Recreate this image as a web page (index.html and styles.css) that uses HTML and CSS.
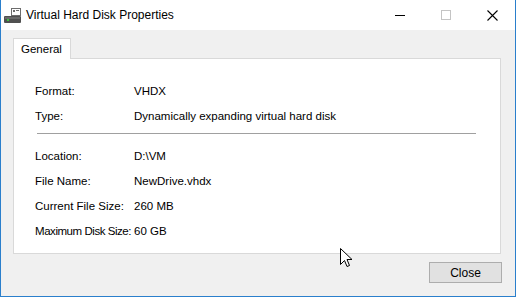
FILE: index.html
```html
<!DOCTYPE html>
<html lang="en">

<head>
    <meta charset="UTF-8" />
    <title>Virtual Hard Disk Properties</title>
    <link rel="stylesheet" href="styles.css">
</head>

<body>
    <div class="window">
        <div class="titlebar">
            <svg class="app-icon" width="17" height="16" viewBox="0 0 17 16">
                <rect x="7.5" y="0.5" width="9" height="7" fill="#fff" stroke="#6d6d6d" />
                <rect x="9" y="2" width="2" height="2" fill="#6d6d6d" />
                <rect x="12" y="2" width="3" height="1" fill="#6d6d6d" />
                <rect x="0" y="8" width="17" height="7" rx="1" fill="#505050" />
                <rect x="1" y="9" width="15" height="2" fill="#6a6a6a" />
                <rect x="3" y="11" width="2" height="2" fill="#3ec43e" />
            </svg>
            <span class="title">Virtual Hard Disk Properties</span>
            <div class="controls">
                <span class="ctl">
                    <svg width="10" height="10" viewBox="0 0 10 10"><rect x="0" y="5" width="10" height="1" fill="#000" /></svg>
                </span>
                <span class="ctl">
                    <svg width="10" height="10" viewBox="0 0 10 10"><rect x="0.5" y="0.5" width="9" height="9" fill="none" stroke="#c4c4c4" /></svg>
                </span>
                <span class="ctl">
                    <svg width="11" height="11" viewBox="0 0 11 11"><path d="M0.5 0.5 L10.5 10.5 M10.5 0.5 L0.5 10.5" stroke="#000" stroke-width="1.1" /></svg>
                </span>
            </div>
        </div>

        <div class="content">
            <div class="tabs">
                <div class="tab">General</div>
            </div>
            <div class="panel">
                <div class="row"><span class="label">Format:</span><span>VHDX</span></div>
                <div class="row"><span class="label">Type:</span><span>Dynamically expanding virtual hard disk</span></div>
                <div class="sep"></div>
                <div class="row"><span class="label">Location:</span><span>D:\VM</span></div>
                <div class="row"><span class="label">File Name:</span><span>NewDrive.vhdx</span></div>
                <div class="row"><span class="label">Current File Size:</span><span>260 MB</span></div>
                <div class="row"><span class="label tight">Maximum Disk Size:</span><span>60 GB</span></div>
            </div>
            <div class="footer">
                <button class="btn">Close</button>
            </div>
        </div>

        <svg class="cursor" width="13" height="20" viewBox="0 0 13 20">
            <path d="M0.5 0.5 L0.5 16.5 L4.5 12.5 L7 18.5 L9.5 17.5 L7 11.5 L12 11.5 Z" fill="#fff" stroke="#000" stroke-linejoin="miter" />
        </svg>
    </div>
</body>

</html>
```

FILE: styles.css
```css
body {
    margin: 0;
    padding: 0;
    font-family: "Liberation Sans", Arial, sans-serif;
    font-size: 11.5px;
    color: #000;
}

.window {
    position: relative;
    width: 516px;
    height: 297px;
    box-sizing: border-box;
    border: 1px solid #2a7fcc;
    border-top: none;
    background-color: #f0f0f0;
    display: flex;
    flex-direction: column;
}

.titlebar {
    height: 30px;
    background-color: #fff;
    display: flex;
    align-items: center;
}

.app-icon {
    margin-left: 3px;
    margin-right: 5px;
    margin-top: 1px;
}

.title {
    font-size: 12px;
}

.controls {
    margin-left: auto;
    display: flex;
    height: 100%;
}

.ctl {
    width: 46px;
    display: flex;
    align-items: center;
    justify-content: center;
}

.ctl svg {
    display: block;
}

.content {
    flex: 1;
    display: flex;
    flex-direction: column;
    padding: 8px 14px 0 12px;
}

.tabs {
    display: flex;
}

.tab {
    height: 21px;
    box-sizing: border-box;
    padding: 0 8px 0 7px;
    line-height: 20px;
    background-color: #fff;
    border: 1px solid #d9d9d9;
    border-bottom: none;
    margin-bottom: -1px;
    position: relative;
}

.panel {
    height: 196px;
    box-sizing: border-box;
    background-color: #fff;
    border: 1px solid #d9d9d9;
    padding: 20px 24px 0 21px;
}

.row {
    height: 25px;
    line-height: 25px;
    display: flex;
    white-space: nowrap;
}

.label {
    width: 99px;
    flex-shrink: 0;
}

.label.tight {
    letter-spacing: -0.45px;
}

.sep {
    height: 1px;
    background-color: #a0a0a0;
    margin: 4px 0 10px 2px;
}

.footer {
    display: flex;
    justify-content: flex-end;
    padding-top: 8px;
}

.btn {
    width: 73px;
    height: 21px;
    margin-right: -1px;
    background-color: #e1e1e1;
    border: 1px solid #adadad;
    font-family: inherit;
    font-size: 12px;
    padding: 0;
    color: #000;
}

.cursor {
    position: absolute;
    left: 339px;
    top: 248px;
}
```
